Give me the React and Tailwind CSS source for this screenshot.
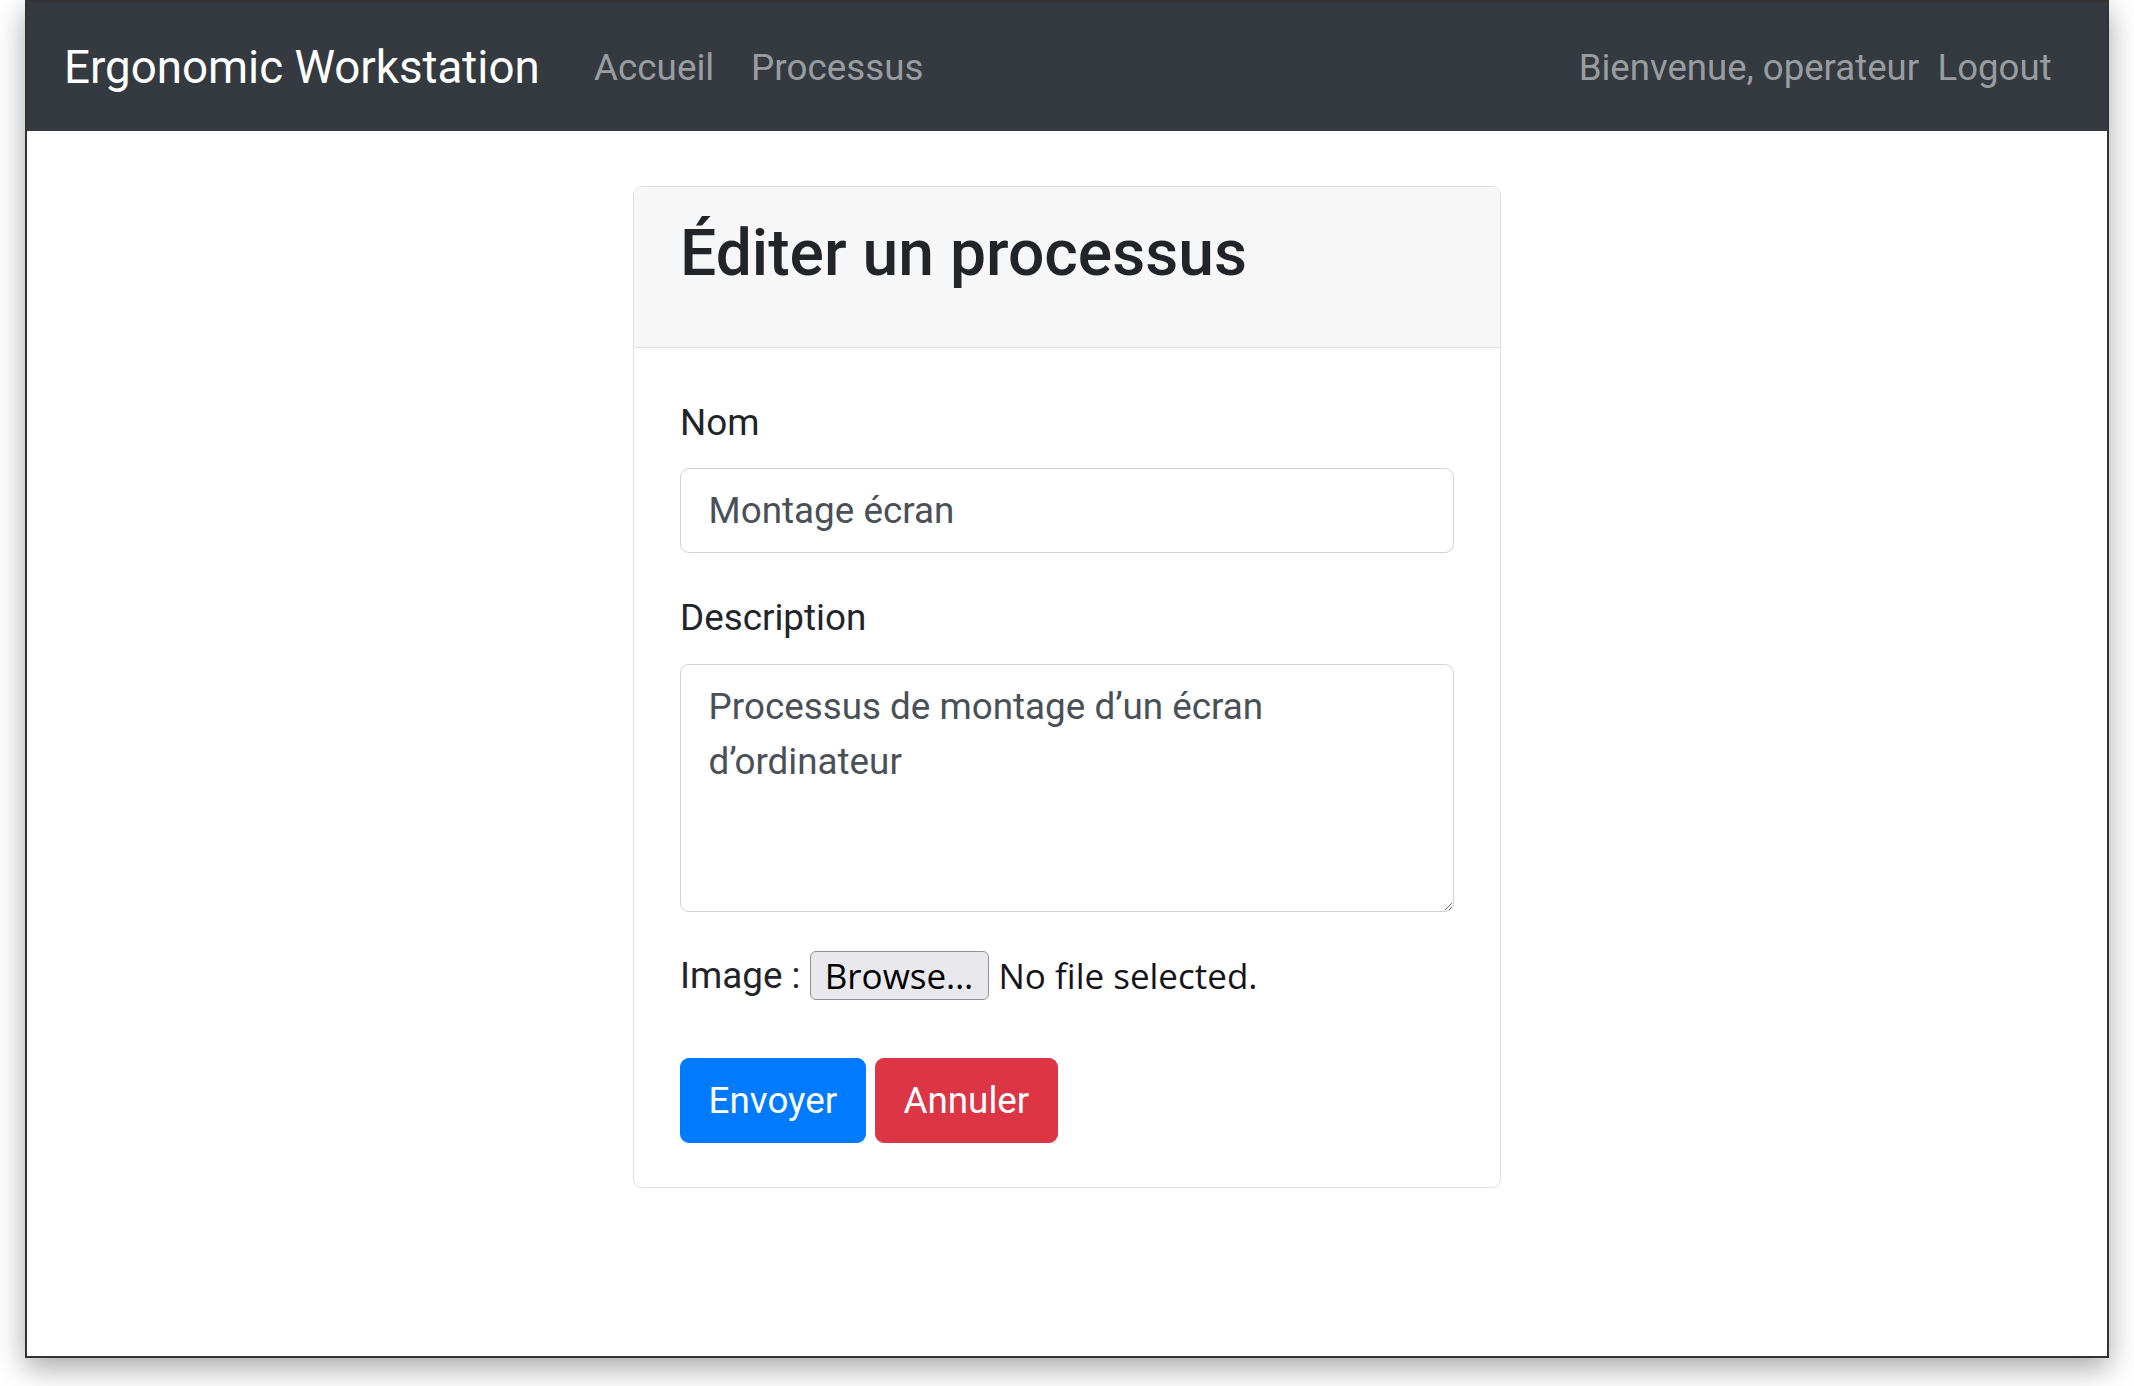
export default function App() {
  return (
    <div className="w-[2134px] h-[1386px] bg-white px-[25px] font-['Roboto',sans-serif] text-[#212529]">
      <div className="h-[1358px] border-2 border-[#333] bg-white flex flex-col shadow-[0_10px_28px_rgba(0,0,0,0.35)]">
        {/* Navbar */}
        <nav className="h-[129px] shrink-0 bg-[#343a40] flex items-center px-[37px] pt-[2px]">
          <a className="text-[45.7px] leading-[69px] text-white mr-[36px]">Ergonomic Workstation</a>
          <a className="px-[18.4px] text-[36.8px] leading-[55.2px] text-[#9a9da0]">Accueil</a>
          <a className="px-[18.4px] text-[36.8px] leading-[55.2px] text-[#9a9da0]">Processus</a>
          <div className="ml-auto flex items-center">
            <span className="text-[36.6px] leading-[55.2px] text-[#9a9da0]">Bienvenue, operateur</span>
            <a className="px-[18.4px] text-[36.6px] leading-[55.2px] text-[#9a9da0]">Logout</a>
          </div>
        </nav>

        {/* Content */}
        <main className="flex justify-center pt-[55px]">
          <div className="w-[868px] border border-[#dfdfdf] rounded-[9px] overflow-hidden">
            <div className="bg-[#f7f7f7] border-b border-[#dfdfdf] px-[46px] pt-[27.6px] pb-[55px]">
              <h3 className="text-[64.2px] leading-[77.3px] font-medium">Éditer un processus</h3>
            </div>
            <div className="px-[46px] pt-[47px] pb-[44px]">
              <label className="block text-[36.8px] leading-[55.2px] mb-[18.4px]">Nom</label>
              <input
                type="text"
                defaultValue="Montage écran"
                className="block w-full h-[85px] border border-[#ced4da] rounded-[9px] px-[27.6px] text-[36.8px] leading-[55.2px] text-[#495057] outline-none mb-[36.8px]"
              />
              <label className="block text-[36.8px] leading-[55.2px] mb-[18.4px]">Description</label>
              <textarea
                defaultValue="Processus de montage d’un écran d’ordinateur"
                className="block w-full h-[248px] border border-[#ced4da] rounded-[9px] px-[27.6px] py-[13.8px] text-[36.8px] leading-[55.2px] text-[#495057] outline-none mb-[36px]"
              />
              <div className="flex items-center h-[55.2px]">
                <span className="text-[36.8px] leading-[55.2px] mr-[9px]">Image :</span>
                <span className="w-[179px] h-[49px] flex items-center justify-center bg-[#e9e9ed] border border-[#8f8f9d] rounded-[6px] font-['Open_Sans',sans-serif] text-[35px] leading-[55.2px] text-black">
                  Browse…
                </span>
                <span className="ml-[10px] font-['Open_Sans',sans-serif] text-[35px] leading-[55.2px] text-[#15141a]">No file selected.</span>
              </div>
              <div className="flex gap-[9px] mt-[55px]">
                <button className="h-[85px] px-[27.6px] bg-[#007bff] border border-[#007bff] rounded-[9px] text-white text-[36.8px] leading-[55.2px]">
                  Envoyer
                </button>
                <button className="h-[85px] px-[27.6px] bg-[#dc3545] border border-[#dc3545] rounded-[9px] text-white text-[36.8px] leading-[55.2px]">
                  Annuler
                </button>
              </div>
            </div>
          </div>
        </main>
      </div>
    </div>
  );
}
